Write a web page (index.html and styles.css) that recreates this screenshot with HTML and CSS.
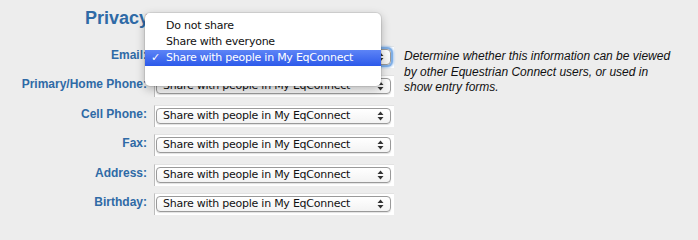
FILE: index.html
```html
<!DOCTYPE html>
<html>
<head>
<meta charset="utf-8">
<link rel="stylesheet" href="styles.css">
</head>
<body>
<div class="page">
  <h2 class="title">Privacy</h2>
  <div class="form">
    <div class="label">Email:</div>
    <div class="cell"><div class="select focused"><span class="val covered">Share with people in My EqConnect</span><svg class="arrows" width="7" height="10" viewBox="0 0 7 10"><path d="M3.5 0.5 L6.5 4 L0.5 4 Z M3.5 9.5 L6.5 6 L0.5 6 Z" fill="#333"/></svg></div></div>
    <div class="desc">Determine whether this information can be viewed by other Equestrian Connect users, or used in show entry forms.</div>

    <div class="label">Primary/Home Phone:</div>
    <div class="cell"><div class="select"><span class="val">Share with people in My EqConnect</span><svg class="arrows" width="7" height="10" viewBox="0 0 7 10"><path d="M3.5 0.5 L6.5 4 L0.5 4 Z M3.5 9.5 L6.5 6 L0.5 6 Z" fill="#333"/></svg></div></div>

    <div class="label">Cell Phone:</div>
    <div class="cell"><div class="select"><span class="val">Share with people in My EqConnect</span><svg class="arrows" width="7" height="10" viewBox="0 0 7 10"><path d="M3.5 0.5 L6.5 4 L0.5 4 Z M3.5 9.5 L6.5 6 L0.5 6 Z" fill="#333"/></svg></div></div>

    <div class="label">Fax:</div>
    <div class="cell"><div class="select"><span class="val">Share with people in My EqConnect</span><svg class="arrows" width="7" height="10" viewBox="0 0 7 10"><path d="M3.5 0.5 L6.5 4 L0.5 4 Z M3.5 9.5 L6.5 6 L0.5 6 Z" fill="#333"/></svg></div></div>

    <div class="label">Address:</div>
    <div class="cell"><div class="select"><span class="val">Share with people in My EqConnect</span><svg class="arrows" width="7" height="10" viewBox="0 0 7 10"><path d="M3.5 0.5 L6.5 4 L0.5 4 Z M3.5 9.5 L6.5 6 L0.5 6 Z" fill="#333"/></svg></div></div>

    <div class="label">Birthday:</div>
    <div class="cell"><div class="select"><span class="val">Share with people in My EqConnect</span><svg class="arrows" width="7" height="10" viewBox="0 0 7 10"><path d="M3.5 0.5 L6.5 4 L0.5 4 Z M3.5 9.5 L6.5 6 L0.5 6 Z" fill="#333"/></svg></div></div>
  </div>

  <div class="menu">
    <div class="item">Do not share</div>
    <div class="item">Share with everyone</div>
    <div class="item selected"><span class="check">✓</span>Share with people in My EqConnect</div>
  </div>
</div>
</body>
</html>
```
FILE: styles.css
```css
html, body {
  margin: 0;
  padding: 0;
  background: #ededed;
}
.page {
  position: relative;
  width: 698px;
  height: 229px;
  overflow: hidden;
}
.title {
  margin: 0;
  padding: 8px 0 0 85px;
  font-family: "Liberation Sans", Arial, sans-serif;
  font-weight: bold;
  font-size: 18px;
  line-height: 21px;
  color: #2f6aa6;
}
.form {
  margin-top: 17px;
  display: grid;
  grid-template-columns: 147px 240px 280px;
  grid-auto-rows: 22px;
  column-gap: 7px;
  row-gap: 7.4px;
}
.label {
  grid-column: 1;
  font-family: "Liberation Sans", Arial, sans-serif;
  font-weight: bold;
  font-size: 12px;
  line-height: 18px;
  color: #2f6aa6;
  text-align: right;
}
.cell {
  grid-column: 2;
  background: #fff;
  border-left: 1px solid #bdbdbd;
  border-top: 1px solid #e2e2e2;
  box-sizing: border-box;
  padding: 2px 3px 0 1px;
}
.select {
  box-sizing: border-box;
  height: 16px;
  border: 1px solid #9a9a9a;
  border-radius: 4px;
  background: linear-gradient(#ffffff, #f3f3f3);
  display: flex;
  align-items: center;
  justify-content: space-between;
  padding: 0 6px 0 6px;
  box-shadow: 0 1px 1px rgba(0,0,0,0.12);
}
.select.focused {
  box-shadow: 0 0 0 2px #7eaee6, 0 0 2px 3px #a9c9ef;
}
.val {
  font-family: "DejaVu Sans", sans-serif;
  font-size: 11px;
  letter-spacing: -0.25px;
  color: #111;
  line-height: 14px;
}
.val.covered {
  visibility: hidden;
}
.arrows {
  display: block;
}
.desc {
  grid-column: 3;
  grid-row: 1 / span 3;
  width: 272px;
  margin-left: 3px;
  padding-top: 3px;
  font-family: "Liberation Sans", Arial, sans-serif;
  font-style: italic;
  font-size: 12px;
  line-height: 15.5px;
  color: #111;
}
.menu {
  position: absolute;
  left: 145px;
  top: 13px;
  width: 236px;
  height: 73px;
  box-sizing: border-box;
  padding-top: 5px;
  background: #fff;
  border-radius: 5px;
  box-shadow: 0 3px 10px rgba(0,0,0,0.28), 0 0 0 1px rgba(0,0,0,0.08);
}
.item {
  position: relative;
  height: 16px;
  line-height: 16px;
  padding-left: 21px;
  font-family: "DejaVu Sans", sans-serif;
  font-size: 11px;
  letter-spacing: -0.25px;
  color: #111;
}
.item.selected {
  background: linear-gradient(#5d84f6, #2c59ea);
  color: #fff;
}
.check {
  position: absolute;
  left: 6px;
  top: 0;
  font-size: 11px;
}
```
